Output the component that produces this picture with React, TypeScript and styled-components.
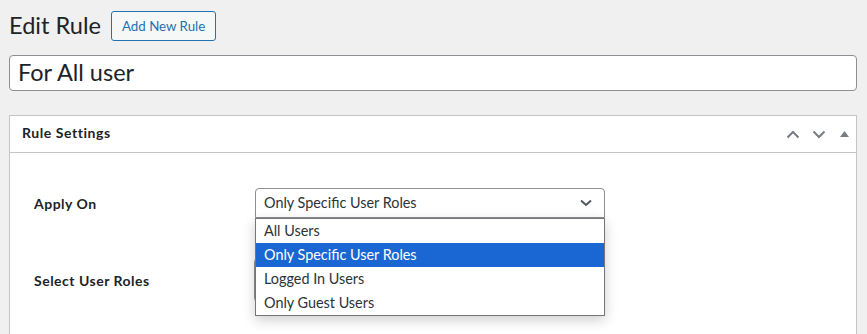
import React from "react";
import styled, { createGlobalStyle } from "styled-components";

const Global = createGlobalStyle`
  html, body { margin: 0; padding: 0; }
  body {
    background: #f0f0f1;
    font-family: Lato, "Noto Sans", sans-serif;
    color: #1d2327;
    font-size: 14.4px;
    overflow: hidden;
  }
`;

const Wrap = styled.div`
  padding: 11px 10px 0 9px;
`;

const HeaderRow = styled.div`
  display: flex;
  align-items: center;
  gap: 10px;
  height: 30px;
`;

const Title = styled.h1`
  margin: 0;
  font-size: 23.6px;
  font-weight: 400;
  line-height: 30px;
  padding-bottom: 2px;
  color: #1d2327;
`;

const AddButton = styled.button`
  font-family: inherit;
  font-size: 13.3px;
  height: 30px;
  padding: 0 10px;
  border: 1px solid #2271b1;
  border-radius: 3px;
  background: #f6f7f7;
  color: #2271b1;
  line-height: 28px;
`;

const TitleInput = styled.div`
  margin-top: 14px;
  height: 36px;
  box-sizing: border-box;
  border: 1px solid #8c8f94;
  border-radius: 4px;
  background: #fff;
  padding: 0 8px;
  font-size: 23.5px;
  line-height: 32px;
  color: #1d2327;
`;

const Postbox = styled.div`
  margin-top: 24px;
  border: 1px solid #c3c4c7;
  background: #fff;
  height: 260px;
`;

const PostboxHeader = styled.div`
  display: flex;
  align-items: center;
  height: 36px;
  border-bottom: 1px solid #c3c4c7;
  padding-left: 12px;
`;

const PostboxTitle = styled.h2`
  margin: 0;
  flex: 1;
  font-size: 14px;
  font-weight: 700;
  letter-spacing: 0.55px;
  padding-bottom: 3px;
  color: #1d2327;
`;

const Handles = styled.div`
  display: flex;
  align-items: center;
`;

const HandleBtn = styled.span<{ $narrow?: boolean }>`
  width: ${(p) => (p.$narrow ? "24px" : "26px")};
  height: 36px;
  display: flex;
  align-items: center;
  justify-content: center;
  color: #787c82;
`;

const Content = styled.div`
  padding: 35px 24px 0 24px;
  display: grid;
  grid-template-columns: 221px 350px;
  row-gap: 40px;
  align-items: center;
`;

const Label = styled.div`
  font-weight: 700;
  font-size: 14px;
  letter-spacing: 0.5px;
  padding-bottom: 0;
  color: #1d2327;
`;

const SelectWrap = styled.div`
  position: relative;
`;

const SelectBox = styled.div`
  height: 30px;
  box-sizing: border-box;
  border: 1px solid #8c8f94;
  border-radius: 4px 4px 0 0;
  background: #fff;
  display: flex;
  align-items: center;
  justify-content: space-between;
  padding: 0 12px 1px 8px;
  color: #2c3338;
`;

const Dropdown = styled.ul`
  position: absolute;
  z-index: 2;
  top: 30px;
  left: 0;
  right: 0;
  margin: 0;
  padding: 0;
  list-style: none;
  background: #fff;
  border: 1px solid #767676;
  box-shadow: 0 4px 12px rgba(0, 0, 0, 0.2);
`;

const Option = styled.li<{ $active?: boolean }>`
  height: 24px;
  line-height: 23px;
  padding-left: 8px;
  background: ${(p) => (p.$active ? "#1a66d2" : "transparent")};
  color: ${(p) => (p.$active ? "#fff" : "#2c3338")};
`;

const MultiBox = styled.div`
  height: 44px;
  box-sizing: border-box;
  margin-left: -1px;
  border: 1px solid #8c8f94;
  border-radius: 4px;
  background: #fff;
`;

const Chevron = ({ up }: { up?: boolean }) => (
  <svg width="14" height="9" viewBox="0 0 14 9" fill="none">
    <path
      d={up ? "M1.5 7.5 L7 2 L12.5 7.5" : "M1.5 1.5 L7 7 L12.5 1.5"}
      stroke="currentColor"
      strokeWidth="2"
    />
  </svg>
);

export default function App() {
  return (
    <>
      <Global />
      <Wrap>
        <HeaderRow>
          <Title>Edit Rule</Title>
          <AddButton>Add New Rule</AddButton>
        </HeaderRow>
        <TitleInput>For All user</TitleInput>
        <Postbox>
          <PostboxHeader>
            <PostboxTitle>Rule Settings</PostboxTitle>
            <Handles>
              <HandleBtn>
                <Chevron up />
              </HandleBtn>
              <HandleBtn>
                <Chevron />
              </HandleBtn>
              <HandleBtn $narrow>
                <svg width="9" height="6" viewBox="0 0 9 6">
                  <path d="M0 6 L4.5 0 L9 6 Z" fill="currentColor" />
                </svg>
              </HandleBtn>
            </Handles>
          </PostboxHeader>
          <Content>
            <Label>Apply On</Label>
            <SelectWrap>
              <SelectBox>
                <span>Only Specific User Roles</span>
                <svg width="12" height="8" viewBox="0 0 12 8" fill="none">
                  <path d="M1 1.5 L6 6 L11 1.5" stroke="#50575e" strokeWidth="2" />
                </svg>
              </SelectBox>
              <Dropdown>
                <Option>All Users</Option>
                <Option $active>Only Specific User Roles</Option>
                <Option>Logged In Users</Option>
                <Option>Only Guest Users</Option>
              </Dropdown>
            </SelectWrap>
            <Label>Select User Roles</Label>
            <MultiBox />
          </Content>
        </Postbox>
      </Wrap>
    </>
  );
}
